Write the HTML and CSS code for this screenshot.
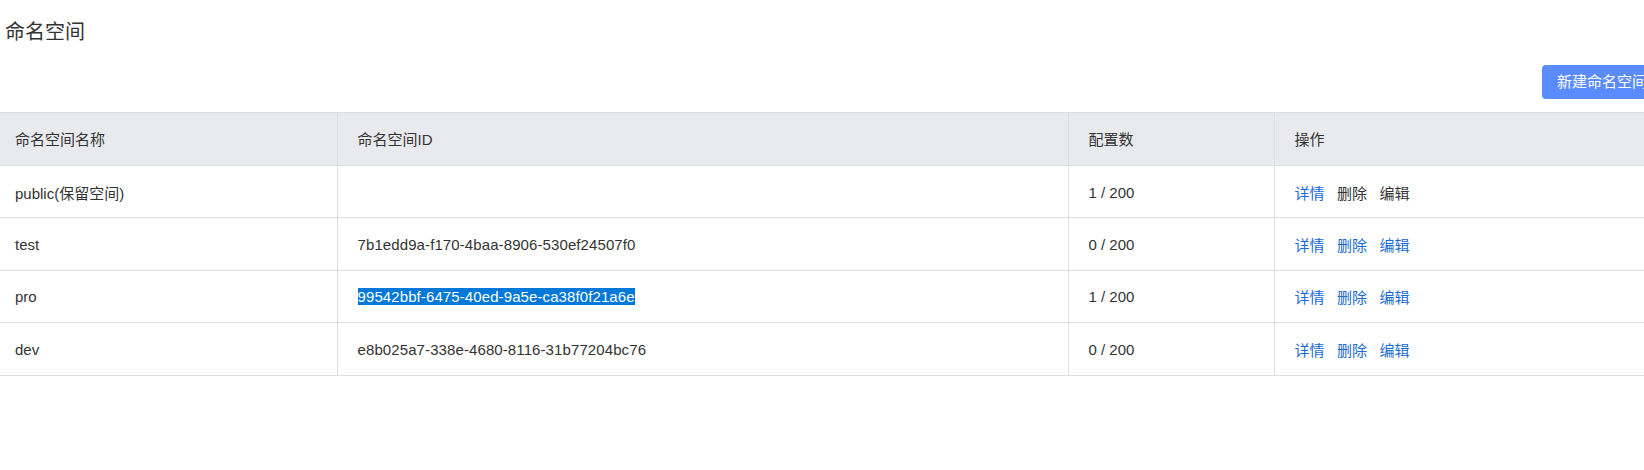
FILE: index.html
```html
<!DOCTYPE html>
<html lang="zh-CN">
<head>
<meta charset="utf-8">
<title>命名空间</title>
<link rel="stylesheet" href="styles.css">
</head>
<body>
<div class="page">
  <div class="title">命名空间</div>
  <div class="toolbar">
    <button class="btn-primary">新建命名空间</button>
  </div>
  <table class="ns-table">
    <colgroup>
      <col class="c-name">
      <col class="c-id">
      <col class="c-count">
      <col class="c-ops">
    </colgroup>
    <thead>
      <tr>
        <th class="first">命名空间名称</th>
        <th>命名空间ID</th>
        <th>配置数</th>
        <th>操作</th>
      </tr>
    </thead>
    <tbody>
      <tr>
        <td class="first">public(保留空间)</td>
        <td></td>
        <td>1 / 200</td>
        <td class="ops"><a class="link">详情</a><a class="link muted">删除</a><a class="link muted">编辑</a></td>
      </tr>
      <tr>
        <td class="first">test</td>
        <td class="id-text">7b1edd9a-f170-4baa-8906-530ef24507f0</td>
        <td>0 / 200</td>
        <td class="ops"><a class="link">详情</a><a class="link">删除</a><a class="link">编辑</a></td>
      </tr>
      <tr>
        <td class="first">pro</td>
        <td class="id-text"><span class="selected">99542bbf-6475-40ed-9a5e-ca38f0f21a6e</span></td>
        <td>1 / 200</td>
        <td class="ops"><a class="link">详情</a><a class="link">删除</a><a class="link">编辑</a></td>
      </tr>
      <tr>
        <td class="first">dev</td>
        <td class="id-text">e8b025a7-338e-4680-8116-31b77204bc76</td>
        <td>0 / 200</td>
        <td class="ops"><a class="link">详情</a><a class="link">删除</a><a class="link">编辑</a></td>
      </tr>
    </tbody>
  </table>
</div>
</body>
</html>
```
FILE: styles.css
```css
html, body {
  margin: 0;
  padding: 0;
  background: #fff;
  overflow: hidden;
}
body {
  font-family: "Liberation Sans", "Noto Sans CJK SC", sans-serif;
  color: #333;
  font-size: 15px;
}
.page {
  width: 1672px;
}
.title {
  font-size: 20px;
  line-height: 28px;
  margin-top: 18px;
  padding-left: 5px;
  color: #333;
}
.toolbar {
  display: flex;
  justify-content: flex-end;
  margin-top: 19px;
  padding-right: 10px;
}
.btn-primary {
  font-family: inherit;
  font-size: 15px;
  color: #fff;
  background: #5b8cff;
  border: none;
  border-radius: 4px;
  height: 34px;
  padding: 0 15px;
  line-height: 34px;
}
.ns-table {
  margin-top: 13px;
  width: 100%;
  border-collapse: collapse;
  table-layout: fixed;
}
.c-name { width: 337px; }
.c-id { width: 731px; }
.c-count { width: 206px; }
.ns-table th, .ns-table td {
  text-align: left;
  font-weight: normal;
  padding: 0 20px;
  border-top: 1px solid #dcdee2;
  border-bottom: 1px solid #dcdee2;
  border-right: 1px solid #dcdee2;
  white-space: nowrap;
}
.ns-table th {
  background: #e9eaee;
  height: 51px;
  padding-bottom: 1px;
}
.ns-table td {
  height: 50.4px;
  padding-top: 1px;
}
.ns-table .first {
  padding-left: 15px;
}
.ops .link {
  margin-right: 12.5px;
}
.link {
  color: #1a6ad4;
  cursor: pointer;
}
.link.muted {
  color: #333;
}
.id-text {
  letter-spacing: 0.1px;
}
.selected {
  background: #0078d7;
  color: #fff;
}
```
